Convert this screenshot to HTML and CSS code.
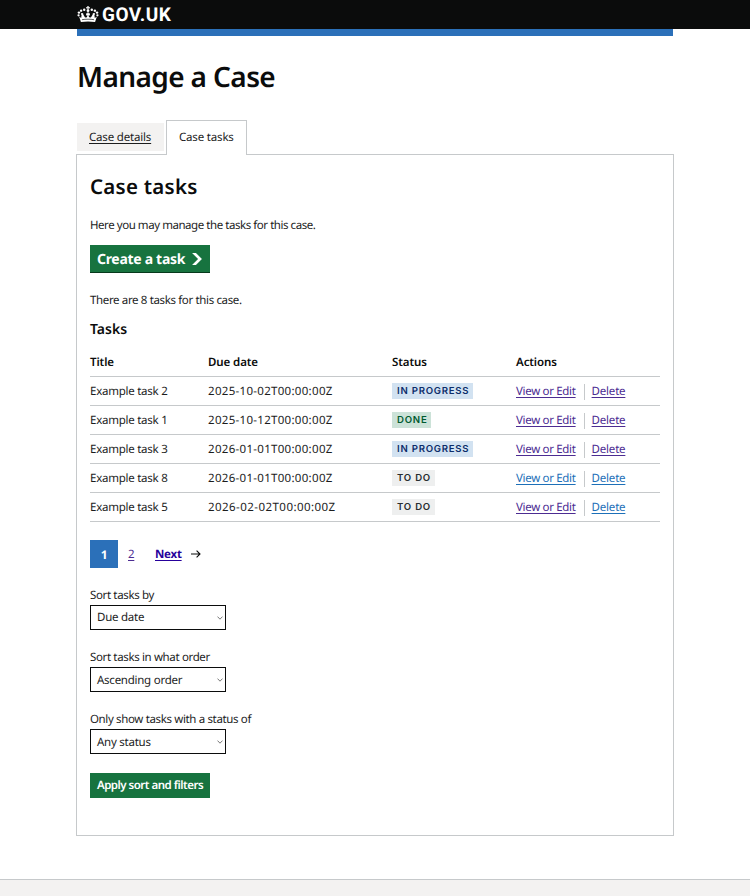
FILE: index.html
```html
<!DOCTYPE html>
<html lang="en">
<head>
<meta charset="utf-8">
<title>Manage a Case</title>
<link rel="stylesheet" href="styles.css">
</head>
<body>
<header class="header">
  <div class="container brand">
    <svg class="crown" viewBox="0 0 23 18" fill="#fff" aria-hidden="true">
      <circle cx="11.5" cy="4.9" r="1.5"/><path d="M10.7 0h1.6l-.3 1.3 1.4-.3v1.6l-1.4-.3.3 1.500h-1.6l.3-1.5-1.4.3V1l1.4.3z"/>
      <circle cx="7.5" cy="4" r="1.3"/><circle cx="4.2" cy="4.9" r="1.3"/><circle cx="1.9" cy="7" r="1.3"/><circle cx="1.5" cy="9.9" r="1.2"/>
      <circle cx="15.5" cy="4" r="1.3"/><circle cx="18.8" cy="4.9" r="1.3"/><circle cx="21.1" cy="7" r="1.3"/><circle cx="21.5" cy="9.9" r="1.2"/>
      <path d="M4 17 2.1 11l2.2 1.7.4-3.2c-.8-.5-.8-1.5 0-2 1.1-.6 2.2.4 1.8 1.4l1.9 3.2 2-.2.5-2.2-1.4.4V7.7l1.3.3-.3-1h2l-.3 1 1.3-.3v2.4l-1.4-.4.5 2.2 2 .2 1.9-3.2c-.4-1 .7-2 1.8-1.4.8.5.8 1.5 0 2l.4 3.2 2.2-1.7L19 17c-4.800-.8-10.200-.8-15 0z"/>
      <path d="M5.1 14.5c4-.7 8.800-.7 12.800 0" fill="none" stroke="#0b0c0c" stroke-width=".7"/>
    </svg>
    <span class="wordmark">GOV.UK</span>
  </div>
</header>
<div class="container">
  <div class="bluebar"></div>
  <h1>Manage a Case</h1>
  <nav class="tabs">
    <a class="tab" href="#">Case details</a>
    <span class="tab tab-selected">Case tasks</span>
  </nav>
  <main class="panel">
    <h2>Case tasks</h2>
    <p class="intro">Here you may manage the tasks for this case.</p>
    <a class="start" href="#">Create a task
      <svg viewBox="0 0 33 40" aria-hidden="true"><path fill="#fff" d="M0 0h13l20 20-20 20H0l20-20z"/></svg>
    </a>
    <p class="count">There are 8 tasks for this case.</p>
    <h3>Tasks</h3>
    <table>
      <thead><tr><th class="c1">Title</th><th class="c2">Due date</th><th class="c3">Status</th><th>Actions</th></tr></thead>
      <tbody>
        <tr><td>Example task 2</td><td class="date">2025-10-02T00:00:00Z</td><td><span class="tag blue">IN PROGRESS</span></td><td><div class="actions"><a class="visited" href="#">View or Edit</a><a class="visited del" href="#">Delete</a></div></td></tr>
        <tr><td>Example task 1</td><td class="date">2025-10-12T00:00:00Z</td><td><span class="tag green">DONE</span></td><td><div class="actions"><a class="visited" href="#">View or Edit</a><a class="visited del" href="#">Delete</a></div></td></tr>
        <tr><td>Example task 3</td><td class="date">2026-01-01T00:00:00Z</td><td><span class="tag blue">IN PROGRESS</span></td><td><div class="actions"><a class="visited" href="#">View or Edit</a><a class="visited del" href="#">Delete</a></div></td></tr>
        <tr><td>Example task 8</td><td class="date">2026-01-01T00:00:00Z</td><td><span class="tag grey">TO DO</span></td><td><div class="actions"><a class="link" href="#">View or Edit</a><a class="link del" href="#">Delete</a></div></td></tr>
        <tr><td>Example task 5</td><td class="date wide">2026-02-02T00:00:00Z</td><td><span class="tag grey">TO DO</span></td><td><div class="actions"><a class="visited" href="#">View or Edit</a><a class="link del" href="#">Delete</a></div></td></tr>
      </tbody>
    </table>
    <nav class="pagination">
      <span class="current">1</span>
      <a class="page visited" href="#">2</a>
      <a class="next" href="#">Next</a>
      <svg class="arrow" viewBox="0 0 10 8" aria-hidden="true"><path d="M0 4h9M5.6.6 9 4 5.6 7.4" fill="none" stroke="#0b0c0c" stroke-width="1.1"/></svg>
    </nav>
    <form>
      <div class="field"><span class="label">Sort tasks by</span>
        <div class="select"><span>Due date</span><svg viewBox="0 0 6 4" aria-hidden="true"><path d="M.5.6 3 3.200 5.500.6"/></svg></div></div>
      <div class="field"><span class="label">Sort tasks in what order</span>
        <div class="select"><span>Ascending order</span><svg viewBox="0 0 6 4" aria-hidden="true"><path d="M.5.6 3 3.200 5.500.6"/></svg></div></div>
      <div class="field"><span class="label">Only show tasks with a status of</span>
        <div class="select"><span>Any status</span><svg viewBox="0 0 6 4" aria-hidden="true"><path d="M.5.6 3 3.200 5.500.6"/></svg></div></div>
      <button class="apply" type="button">Apply sort and filters</button>
    </form>
  </main>
</div>
<footer class="footer"></footer>
</body>
</html>
```
FILE: styles.css
```css
* { box-sizing: border-box; }
body { margin: 0; height: 896px; overflow: hidden; background: #fff; color: #1c1d1d; font: 11.5px/18px "Noto Sans", sans-serif; letter-spacing: -.25px; text-rendering: geometricPrecision; white-space: nowrap; display: flex; flex-direction: column; }
h1, h2, h3, p { margin: 0; letter-spacing: 0; color: #0b0c0c; }
p { font: inherit; color: inherit; }
.container { width: 597px; margin: 0 76px 0 77px; }
.header { height: 29px; background: #0b0c0c; }
.brand { height: 29px; display: flex; align-items: center; gap: 3px; color: #fff; }
.crown { width: 22px; height: 17px; display: block; margin-top: -1px; }
.wordmark { font: bold 19px/28px Roboto, sans-serif; letter-spacing: .5px; }
.bluebar { height: 7px; width: 596px; background: #2b70b9; }
h1 { font-size: 28px; line-height: 40px; margin-top: 21px; font-weight: 600; letter-spacing: -.6px; }
.tabs { display: flex; margin-top: 23px; height: 35px; gap: 3px; position: relative; margin-bottom: -1px; }
.tab { height: 28px; margin-top: 3px; width: 87px; padding: 6px 0 0 12px; background: #f3f2f1; color: #1c1d1d; letter-spacing: -.18px; }
.tab-selected { height: 35px; margin-top: 0; margin-left: -1px; width: 81px; padding: 8px 0 0 12px; background: #fff; border: 1px solid #c6c9cb; border-bottom: 0; }
.panel { margin-left: -1px; border: 1px solid #c6c9cb; height: 682px; padding: 0 12px 0 13px; }
h2 { font-size: 20.5px; line-height: 28px; margin-top: 18px; font-weight: 600; letter-spacing: .25px; }
.intro { margin-top: 16px; letter-spacing: -.45px; }
.start { display: flex; align-items: center; width: 120px; height: 28px; margin-top: 10px; padding: 2px 8px 0 7px; background: #17733f; border-bottom: 1px solid #06391c; color: #fff; text-decoration: none; font-size: 14px; font-weight: 700; letter-spacing: -.3px; justify-content: space-between; }
.start svg { width: 10px; height: 12px; margin-top: -1px; }
.count { margin-top: 19px; letter-spacing: -.36px; }
h3 { font-size: 14px; line-height: 20px; margin-top: 10px; font-weight: 600; }
table { width: 570px; border-collapse: collapse; table-layout: fixed; margin-top: 7px; }
th, td { padding: 2px 0 0; height: 29px; line-height: 16px; text-align: left; vertical-align: middle; border-bottom: 1px solid #c6c9cb; }
th { padding-top: 3px; font-weight: 600; color: #0b0c0c; letter-spacing: -.1px; }
.date { letter-spacing: .3px; }
.date.wide { letter-spacing: .45px; }
.c1 { width: 118px; }
.c2 { width: 184px; }
.c3 { width: 124px; }
.tag { display: block; width: max-content; height: 16px; margin-top: -2px; padding: 0 4px 0 5px; font: 600 9.6px/17px Inter, sans-serif; letter-spacing: .77px; }
.blue { background: #d2e2f1; color: #0c2d6a; }
.green { background: #cce2d8; color: #005a30; }
.grey { background: #eeefef; color: #282d30; }
.actions { display: flex; letter-spacing: -.32px; }
.visited { color: #4c2c92; }
.link { color: #1d70b8; }
a { text-underline-offset: 1.5px; text-decoration-thickness: 1px; }
.del { border-left: 1px solid #c6c9cb; margin-left: 8px; padding-left: 7px; letter-spacing: -.2px; }
.pagination { display: flex; align-items: center; height: 28px; margin-top: 18px; }
.current { width: 28px; height: 28px; line-height: 30px; font-size: 12px; background: #2b70b9; color: #fff; text-align: center; font-weight: 700; }
.page { margin-left: 10px; width: 27px; padding-top: 2px; }
.next { font-weight: 700; color: #26009b; width: 36px; padding-top: 2px; }
.arrow { width: 10px; height: 8px; }
form { margin-top: 19px; }
.field { height: 62.300px; }
.label { display: block; height: 18.400px; letter-spacing: -.36px; }
.select { width: 136px; height: 25px; border: 1px solid #0b0c0c; display: flex; align-items: center; justify-content: space-between; padding: 2px 2px 0 6px; }
.select svg { width: 6px; height: 4px; fill: none; stroke: #555; stroke-width: .8; margin-top: -1px; }
.apply { display: block; margin: 0; width: 120px; height: 25px; border: 0; padding: 0; background: #17733f; color: #fff; font: 600 11.5px/26px "Noto Sans", sans-serif; letter-spacing: -.5px; text-rendering: inherit; }
.footer { margin-top: 43px; flex: 1; background: #f3f2f1; border-top: 1px solid #c6c9cb; }
```
